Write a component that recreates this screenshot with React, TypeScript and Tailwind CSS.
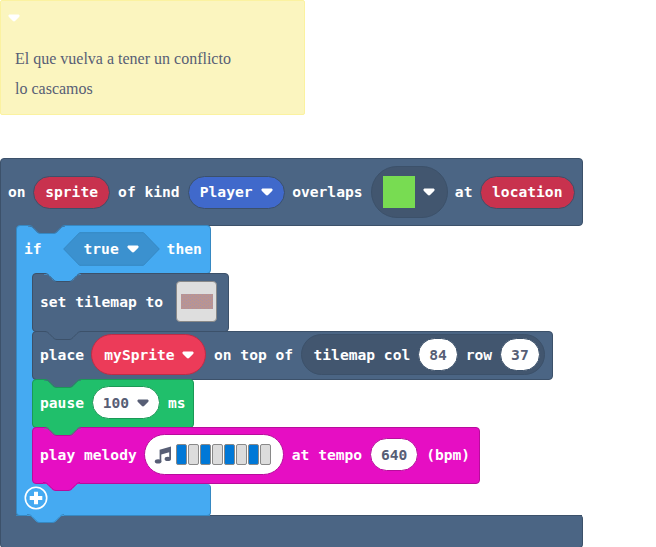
import type { ReactNode } from "react";

const SLATE = "#4b6584";
const SLATE_EDGE = "#3c516a";

function Caret({ className = "text-white" }: { className?: string }) {
  return (
    <svg viewBox="0 0 12 8" className={`h-2 w-3 shrink-0 ${className}`} fill="currentColor">
      <path d="M2 .4h8c1.600 0 2.100 1.400 1.100 2.500L7.300 6.800q-1.300 1.200-2.600 0L.9 2.900C-.1 1.800.4.4 2 .4Z" />
    </svg>
  );
}

function Notch({ fill, stroke }: { fill: string; stroke: string }) {
  return (
    <svg viewBox="0 -1 38 11" className="absolute -top-px left-[11px] z-10 h-[11px] w-[38px]">
      <path d="M0 -1V.5h1c2 0 3 .8 4 1.800l4 4c1 1 2 1.400 4 1.400h12c2 0 3-.4 4-1.400l4-4c1-1 2-1.800 4-1.800V-1Z" fill={fill} />
      <path d="M0 -.5h1c2 0 3 1 4 2l4 4c1 1 2 2 4 2h12c2 0 3-1 4-2l4-4c1-1 2-2 4-2" fill="none" stroke={stroke} />
    </svg>
  );
}

function Block({ className, children }: { className: string; children: ReactNode }) {
  return (
    <div className={`relative flex items-center gap-2 rounded-[4px] border px-[7px] ${className}`}>{children}</div>
  );
}

function Pill({ className, children }: { className: string; children: ReactNode }) {
  return (
    <span className={`flex h-[33px] shrink-0 items-center rounded-full border ${className}`}>
      {children}
    </span>
  );
}

function Note() {
  return (
    <div className="h-[115px] w-[305px] rounded-[2px] border border-[#fbf2a0] bg-[#fbf5bf] pl-[14px] font-['Liberation_Serif',serif] text-[16px] leading-[30px] text-[#575e75]">
      <div className="-ml-[7px] flex h-[43px] pt-[13px]">
        <Caret />
      </div>
      <p>El que vuelva a tener un conflicto</p>
      <p>lo cascamos</p>
    </div>
  );
}

const melody = [1, 0, 1, 0, 1, 0, 1, 0];

function Melody() {
  return (
    <Pill className="-ml-px h-[41px] w-[140px] border-[#b80c9c] bg-white pl-[9px]">
      <svg viewBox="0 0 18 18" className="mr-1 h-[18px] w-[18px] text-[#575e75]" fill="currentColor">
        <path d="M5.600 3.700 17 .5v12.300h-1.800V6.200L7.300 8.400v7H5.600Z" />
        <ellipse cx="4.100" cy="15.400" rx="3.300" ry="2.100" />
        <ellipse cx="13.800" cy="12.900" rx="3.200" ry="2.100" />
      </svg>
      <span className="flex gap-px">
        {melody.map((on, i) => (
          <span
            key={i}
            className={`h-[21px] w-[11px] rounded-[2px] border border-[#898989] ${on ? "bg-[#0078d7]" : "bg-[#dcdcdc]"}`}
          />
        ))}
      </span>
    </Pill>
  );
}

export default function App() {
  return (
    <div className="h-[547px] w-[656px] overflow-hidden bg-white">
      <Note />
      <main className="mt-[43px] w-[583px] whitespace-pre font-['DejaVu_Sans_Mono',monospace] text-[14.62px] leading-5 font-bold text-white">
        <Block className="z-20 h-[68px] rounded-bl-none border-[#3c516a] bg-[#4b6584]">
          <span>on</span>
          <Pill className="-ml-[0.5px] w-[77px] justify-center border-[#3c516a] bg-[#c8324e]">sprite</Pill>
          <span>of kind</span>
          <Pill className="w-[97px] justify-center gap-2 border-[#3c516a] bg-[#4069cb]">
            Player
            <Caret />
          </Pill>
          <span className="-ml-[0.5px]">overlaps</span>
          <Pill className="h-[52px] w-[77px] justify-center gap-2 border-[#3c516a] bg-[#42566f]">
            <i className="h-8 w-8 bg-[#78dc52]" />
            <Caret />
          </Pill>
          <span className="-ml-[0.7px]">at</span>
          <Pill className="-ml-[0.7px] w-[95px] justify-center border-[#3c516a] bg-[#c8324e]">location</Pill>
        </Block>

        <div className="relative z-30 -mt-px flex">
          <div className="-mt-px -mr-2 w-6 border-l border-[#3c516a] bg-[#4b6584]" />
          <section className="relative w-[195px]">
            <div className="relative z-10">
              <Block className="h-[49px] rounded-bl-none border-[#3688c2] bg-[#45aaf2] pb-[2px]">
                <Notch fill={SLATE} stroke="#3688c2" />
                <span>if</span>
                <span className="relative ml-[13px] flex h-[34px] w-[97px] items-center justify-center gap-2">
                  <svg viewBox="0 0 97 34" className="absolute inset-0 h-[34px] w-[97px]">
                    <path d="M.7 17 16.500.7h64L96.300 17 80.500 33.300h-64Z" fill="#3b91cf" stroke="#3688c2" />
                  </svg>
                  <span className="relative">true</span>
                  <Caret className="relative text-white" />
                </span>
                <span className="-ml-px">then</span>
              </Block>
            </div>
            <div className="relative z-20 -mt-px flex">
              <div className="-mr-1 w-5 shrink-0 border-l border-[#3688c2] bg-[#45aaf2]" />
              <div className="relative w-0">
                <Block className="h-[59px] w-[197px] border-[#3c516a] bg-[#4b6584] pb-[2px]">
                  <Notch fill="#45aaf2" stroke={SLATE_EDGE} />
                  <span>set tilemap to</span>
                  <span className="ml-[5px] flex h-[41px] w-[41px] items-center justify-center rounded-[4px] border border-[#898989] bg-[#dedede]">
                    <svg viewBox="0 0 32 15" className="h-[15px] w-8">
                      <defs>
                        <pattern id="tiles" width="4" height="3" patternUnits="userSpaceOnUse">
                          <path d="M0 0h4v3H0Z" fill="#b99492" />
                          <path d="M1 0h1v1H1ZM3 2h1v1H3Z" fill="#aa91a6" />
                        </pattern>
                      </defs>
                      <path d="M0 0h32v15H0Z" fill="url(#tiles)" />
                    </svg>
                  </span>
                </Block>
                <Block className="-mt-px h-[49px] w-[521px] border-[#3c516a] bg-[#4b6584] pb-[2px]">
                  <Notch fill={SLATE} stroke={SLATE_EDGE} />
                  <span>place</span>
                  <Pill className="-ml-[0.5px] h-[41px] w-[115px] justify-center gap-[7px] border-[#bc2d46] bg-[#ec3b59]">
                    mySprite
                    <Caret />
                  </Pill>
                  <span className="-ml-[0.5px]">on top of</span>
                  <Pill className="-ml-[0.5px] h-[41px] w-[244px] justify-end gap-2 border-[#3c516a] bg-[#42566f] pr-1">
                    <span>tilemap col</span>
                    <Pill className="w-[39.500px] justify-center border-[#3c516a] bg-white text-[#575e75]">84</Pill>
                    <span>row</span>
                    <Pill className="w-[39.500px] justify-center border-[#3c516a] bg-white text-[#575e75]">37</Pill>
                  </Pill>
                </Block>
                <Block className="-mt-px h-[49px] w-[162px] border-[#1a9956] bg-[#20bf6b] pb-[2px]">
                  <Notch fill={SLATE} stroke="#1a9956" />
                  <span>pause</span>
                  <Pill className="w-[68px] justify-center gap-2 border-[#1a9956] bg-white text-[#575e75]">
                    100
                    <Caret className="text-[#575e75]" />
                  </Pill>
                  <span>ms</span>
                </Block>
                <Block className="-mt-px h-[57px] w-[448px] border-[#b80c9c] bg-[#e60ec3] pb-[2px]">
                  <Notch fill="#20bf6b" stroke="#b80c9c" />
                  <span>play melody</span>
                  <Melody />
                  <span>at tempo</span>
                  <Pill className="w-12 justify-center border-[#b80c9c] bg-white text-[#575e75]">640</Pill>
                  <span>(bpm)</span>
                </Block>
              </div>
            </div>
            <div className="relative z-30 flex h-8 rounded-b-[4px] rounded-tr-[4px] border-r border-b border-l border-[#3688c2] bg-[#45aaf2]">
              <div className="absolute -top-px left-[15px]">
                <Notch fill="#e60ec3" stroke="#b80c9c" />
              </div>
              <svg viewBox="0 0 24 24" className="mt-[2px] ml-[7px] h-6 w-6">
                <circle cx="12" cy="12" r="10.700" fill="none" stroke="white" strokeWidth="1.600" />
                <path d="M10 5.700h4V10h4.300v4H14v4.300h-4V14H5.700v-4H10Z" fill="white" />
              </svg>
            </div>
          </section>
        </div>

        <div className="relative z-40 -mt-px h-[33px] rounded-[4px] rounded-tl-none">
          <div className="flex h-full rounded-[4px] rounded-tl-none border border-t-0 border-[#3c516a] bg-[#4b6584]">
            <div className="w-[15px]" />
            <div className="relative h-px w-[194px] bg-[#3688c2]">
              <Notch fill="#45aaf2" stroke="#3688c2" />
            </div>
            <div className="h-px flex-1 bg-[#3c516a]" />
          </div>
        </div>
      </main>
    </div>
  );
}
